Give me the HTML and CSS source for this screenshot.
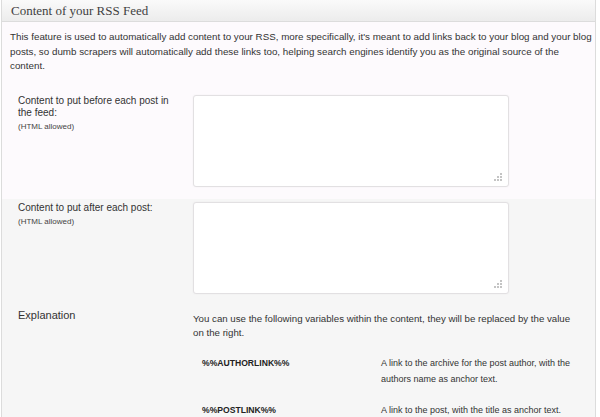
FILE: index.html
```html
<!DOCTYPE html>
<html>
<head>
<meta charset="utf-8">
<link rel="stylesheet" href="styles.css">
</head>
<body>
<div class="postbox">
  <h3 class="postbox-title">Content of your RSS Feed</h3>
  <div class="inside">
    <p class="intro">This feature is used to automatically add content to your RSS, more specifically, it's meant to add links back to your blog and your blog posts, so dumb scrapers will automatically add these links too, helping search engines identify you as the original source of the content.</p>
    <div class="row row-active">
      <label class="label">Content to put before each post in the feed:<small>(HTML allowed)</small></label>
      <div class="field">
        <textarea class="area"></textarea>
        <svg class="grip" width="8" height="8" viewBox="0 0 8 8"><rect x="6" y="0" width="2" height="2"/><rect x="3" y="3" width="2" height="2"/><rect x="6" y="3" width="2" height="2"/><rect x="0" y="6" width="2" height="2"/><rect x="3" y="6" width="2" height="2"/><rect x="6" y="6" width="2" height="2"/></svg>
      </div>
    </div>
    <div class="row">
      <label class="label">Content to put after each post:<small>(HTML allowed)</small></label>
      <div class="field">
        <textarea class="area"></textarea>
        <svg class="grip" width="8" height="8" viewBox="0 0 8 8"><rect x="6" y="0" width="2" height="2"/><rect x="3" y="3" width="2" height="2"/><rect x="6" y="3" width="2" height="2"/><rect x="0" y="6" width="2" height="2"/><rect x="3" y="6" width="2" height="2"/><rect x="6" y="6" width="2" height="2"/></svg>
      </div>
    </div>
    <div class="row row-expl">
      <div class="label label-big">Explanation</div>
      <div class="expl">
        <p class="expl-text">You can use the following variables within the content, they will be replaced by the value on the right.</p>
        <div class="vars">
          <div class="var-row">
            <div class="var-name">%%AUTHORLINK%%</div>
            <div class="var-desc">A link to the archive for the post author, with the authors name as anchor text.</div>
          </div>
          <div class="var-row">
            <div class="var-name">%%POSTLINK%%</div>
            <div class="var-desc">A link to the post, with the title as anchor text.</div>
          </div>
        </div>
      </div>
    </div>
  </div>
</div>
</body>
</html>
```
FILE: styles.css
```css
html, body {
  margin: 0;
  padding: 0;
  background: #ffffff;
  font-family: "Liberation Sans", Arial, sans-serif;
  color: #333333;
}

.postbox {
  margin-left: 1px;
  width: 595px;
  height: 417px;
  box-sizing: border-box;
  border-left: 1px solid #dcdcdc;
  border-right: 1px solid #dcdcdc;
  background: #f6f6f6;
  overflow: hidden;
}

.postbox-title {
  margin: 0;
  height: 22px;
  box-sizing: border-box;
  padding: 3px 0 0 9px;
  font-family: "Liberation Serif", "Times New Roman", serif;
  font-weight: normal;
  font-size: 13px;
  line-height: 16px;
  color: #3f3f3f;
  background: linear-gradient(#fafafa, #ececec);
  border-bottom: 1px solid #dcdcdc;
}

.inside {
  display: flex;
  flex-direction: column;
}

.intro {
  margin: 0;
  padding: 8px 1px 18px 8px;
  font-size: 9.8px;
  line-height: 14.5px;
  color: #333;
  background: #fdfafd;
}

.row {
  display: grid;
  grid-template-columns: 175px 316px;
  padding: 3px 0 12px 16px;
}

.row-active {
  background: #fdfafd;
}

.label {
  display: block;
  font-size: 10px;
  line-height: 12px;
  color: #333;
  padding-right: 18px;
}

.label small {
  display: block;
  margin-top: 3px;
  font-size: 8px;
  line-height: 10px;
  color: #444;
}

.field {
  position: relative;
  width: 316px;
  height: 92px;
}

.area {
  display: block;
  width: 316px;
  height: 92px;
  box-sizing: border-box;
  margin: 0;
  border: 1px solid #e2e0e2;
  border-radius: 3px;
  background: #ffffff;
  box-shadow: 0 0 2px rgba(0, 0, 0, 0.05);
  resize: none;
}

.grip {
  position: absolute;
  right: 7px;
  bottom: 6px;
  fill: #c4c4c4;
}

.row-expl {
  grid-template-columns: 175px 380px;
  padding-top: 2px;
  padding-bottom: 0;
}

.label-big {
  font-size: 11px;
  line-height: 14px;
}

.expl {
  padding-top: 4px;
}

.expl-text {
  margin: 0;
  font-size: 9.7px;
  line-height: 14px;
  color: #333;
}

.vars {
  margin-top: 15px;
  display: flex;
  flex-direction: column;
}

.var-row {
  display: grid;
  grid-template-columns: 179px 192px;
  padding: 0 0 15px 9px;
}

.var-name {
  font-size: 8.6px;
  font-weight: bold;
  line-height: 16px;
  color: #222;
}

.var-desc {
  font-size: 9px;
  line-height: 16px;
  color: #333;
}
```
